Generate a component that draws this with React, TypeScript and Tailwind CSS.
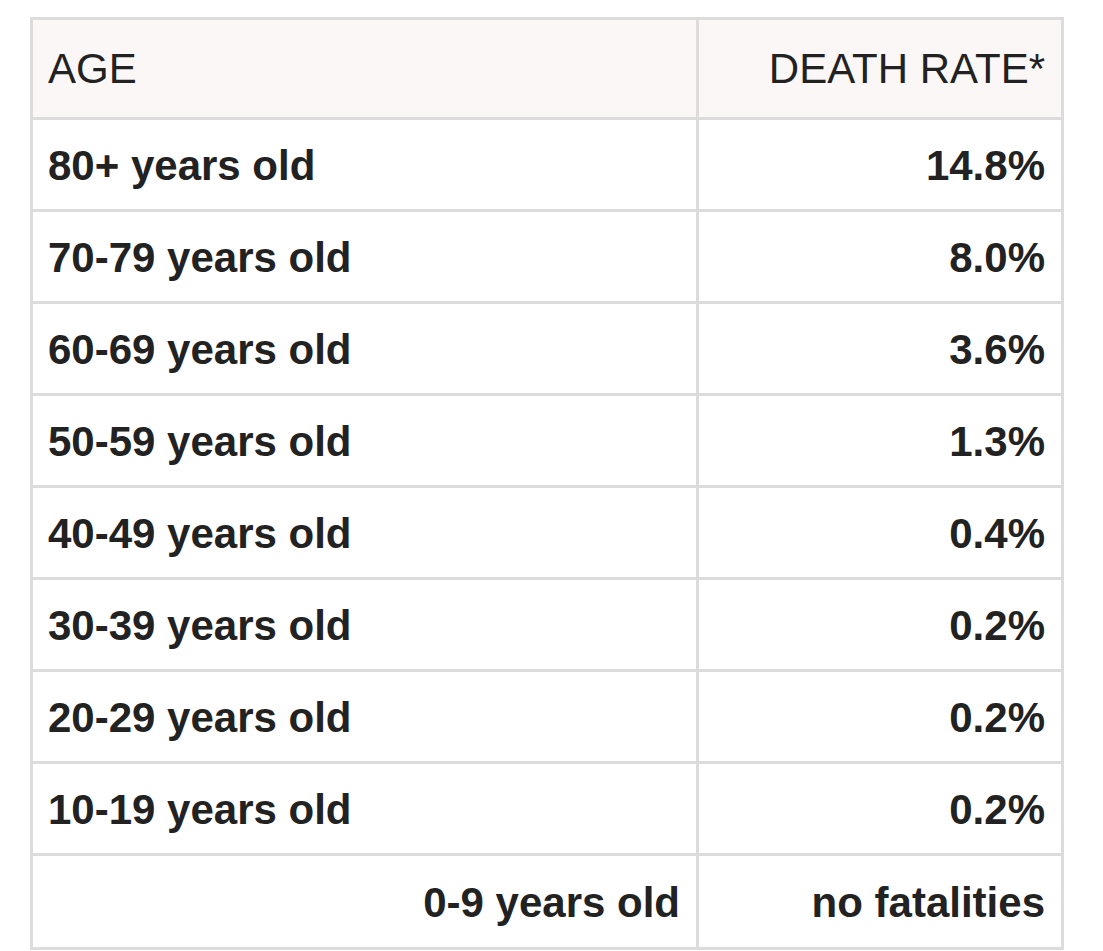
const rows = [
  { age: "80+ years old", rate: "14.8%" },
  { age: "70-79 years old", rate: "8.0%" },
  { age: "60-69 years old", rate: "3.6%" },
  { age: "50-59 years old", rate: "1.3%" },
  { age: "40-49 years old", rate: "0.4%" },
  { age: "30-39 years old", rate: "0.2%" },
  { age: "20-29 years old", rate: "0.2%" },
  { age: "10-19 years old", rate: "0.2%" },
];

export default function App() {
  return (
    <div className="w-[1103px] h-[951px] bg-white pt-[17px] pl-[30px] font-['Liberation_Sans',Arial,sans-serif] text-[#222222] text-[42px] leading-none">
      <div className="w-[1034px] border-[3px] border-[#dcdcdc]">
        {/* header */}
        <div className="grid grid-cols-[666px_1fr] h-[100px] bg-[#faf7f6] border-b-[3px] border-[#dcdcdc]">
          <div className="flex items-center pl-[15px] border-r-[3px] border-[#dcdcdc]">AGE</div>
          <div className="flex items-center justify-end pr-[16px]">DEATH RATE*</div>
        </div>

        {rows.map((r) => (
          <div
            key={r.age}
            className="grid grid-cols-[666px_1fr] h-[92px] border-b-[3px] border-[#dcdcdc] font-bold"
          >
            <div className="flex items-center pl-[15px] pt-[3px] border-r-[3px] border-[#dcdcdc]">{r.age}</div>
            <div className="flex items-center justify-end pr-[16px] pt-[3px]">{r.rate}</div>
          </div>
        ))}

        <div className="grid grid-cols-[666px_1fr] h-[91px] font-bold">
          <div className="flex items-center justify-end pr-[16px] pt-[3px] border-r-[3px] border-[#dcdcdc]">0-9 years old</div>
          <div className="flex items-center justify-end pr-[16px] pt-[3px]">no fatalities</div>
        </div>
      </div>
    </div>
  );
}
